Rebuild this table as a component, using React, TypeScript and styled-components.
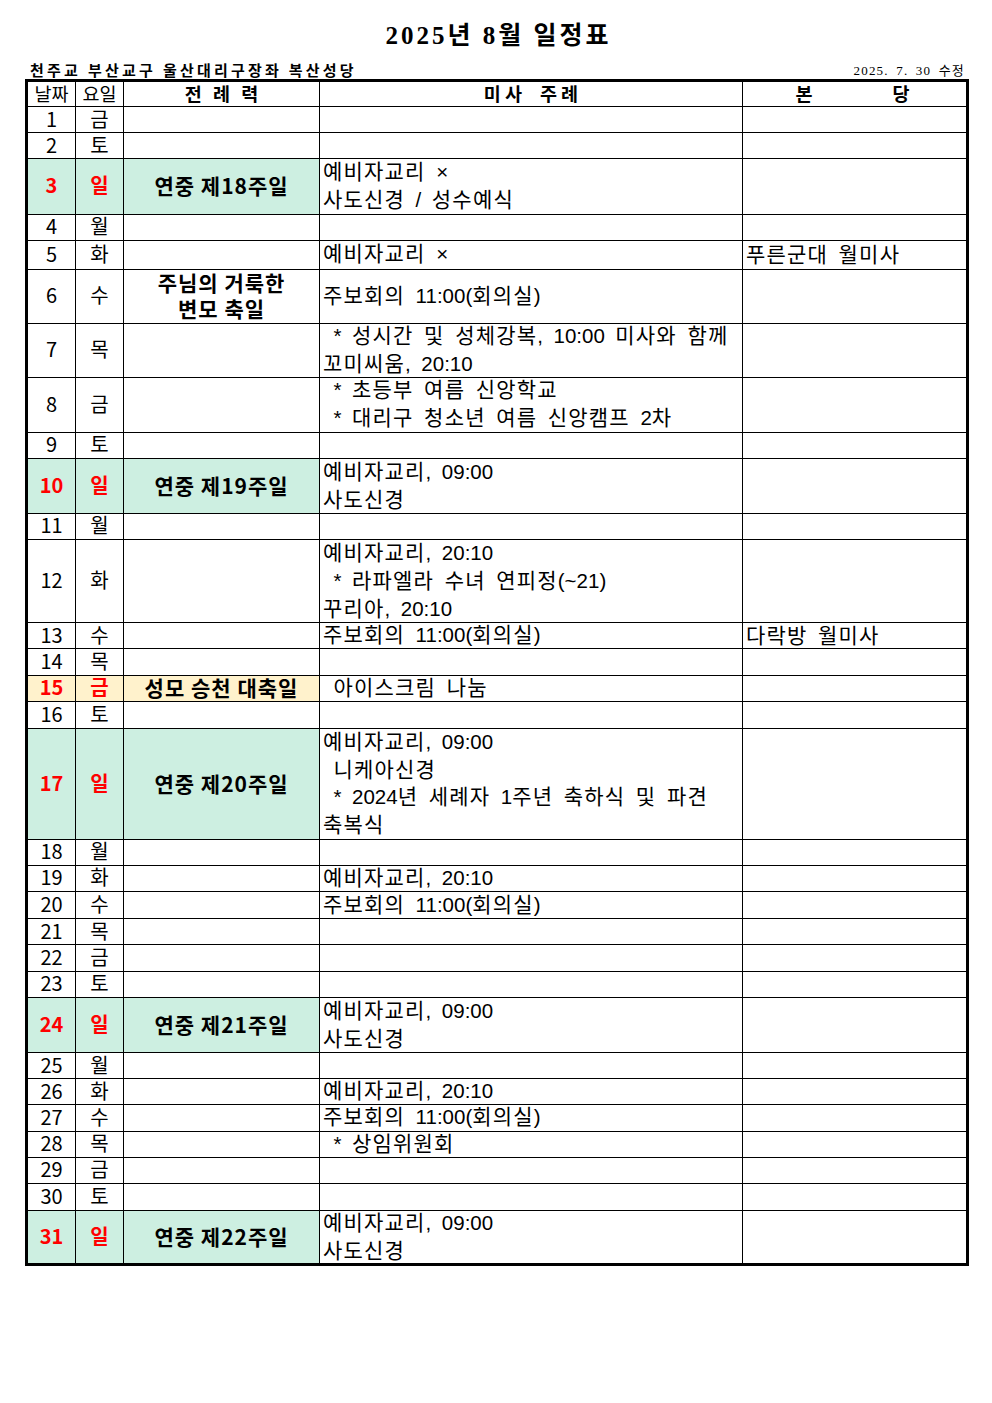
import React from "react";
import styled, { createGlobalStyle } from "styled-components";

const GlobalStyle = createGlobalStyle`
  html, body { margin: 0; padding: 0; background: #fff; }
  body { font-family: "Noto Sans CJK KR", "Noto Sans", sans-serif; color: #000; }
`;

const COLS = "48px 48px 196px 423px 223px";
const GREEN = "#cdefe1";
const YELLOW = "#fff2cc";
const RED = "#ff0000";

type Tone = "green" | "yellow" | undefined;

interface RowData {
  d: number;
  w: string;
  h: number;
  tone?: Tone;
  feast?: string[];
  mass?: string[];
  parish?: string;
}

const rows: RowData[] = [
  { d: 1, w: "금", h: 26 },
  { d: 2, w: "토", h: 26 },
  { d: 3, w: "일", h: 55.5, tone: "green", feast: ["연중 제18주일"], mass: ["예비자교리 ×", "사도신경 / 성수예식"] },
  { d: 4, w: "월", h: 26.5 },
  { d: 5, w: "화", h: 28.5, mass: ["예비자교리 ×"], parish: "푸른군대 월미사" },
  { d: 6, w: "수", h: 54, feast: ["주님의 거룩한", "변모 축일"], mass: ["주보회의 11:00(회의실)"] },
  { d: 7, w: "목", h: 54.5, mass: [" * 성시간 및 성체강복, 10:00 미사와 함께", "꼬미씨움, 20:10"] },
  { d: 8, w: "금", h: 54.5, mass: [" * 초등부 여름 신앙학교", " * 대리구 청소년 여름 신앙캠프 2차"] },
  { d: 9, w: "토", h: 26.5 },
  { d: 10, w: "일", h: 54.5, tone: "green", feast: ["연중 제19주일"], mass: ["예비자교리, 09:00", "사도신경"] },
  { d: 11, w: "월", h: 26.5 },
  { d: 12, w: "화", h: 83, mass: ["예비자교리, 20:10", " * 라파엘라 수녀 연피정(~21)", "꾸리아, 20:10"] },
  { d: 13, w: "수", h: 26, mass: ["주보회의 11:00(회의실)"], parish: "다락방 월미사" },
  { d: 14, w: "목", h: 26.5 },
  { d: 15, w: "금", h: 26.5, tone: "yellow", feast: ["성모 승천 대축일"], mass: [" 아이스크림 나눔"] },
  { d: 16, w: "토", h: 27 },
  { d: 17, w: "일", h: 110.5, tone: "green", feast: ["연중 제20주일"], mass: ["예비자교리, 09:00", " 니케아신경", " * 2024년 세례자 1주년 축하식 및 파견", "축복식"] },
  { d: 18, w: "월", h: 26 },
  { d: 19, w: "화", h: 26.5, mass: ["예비자교리, 20:10"] },
  { d: 20, w: "수", h: 27, mass: ["주보회의 11:00(회의실)"] },
  { d: 21, w: "목", h: 26 },
  { d: 22, w: "금", h: 26.5 },
  { d: 23, w: "토", h: 26 },
  { d: 24, w: "일", h: 55.5, tone: "green", feast: ["연중 제21주일"], mass: ["예비자교리, 09:00", "사도신경"] },
  { d: 25, w: "월", h: 26 },
  { d: 26, w: "화", h: 26, mass: ["예비자교리, 20:10"] },
  { d: 27, w: "수", h: 26.5, mass: ["주보회의 11:00(회의실)"] },
  { d: 28, w: "목", h: 26, mass: [" * 상임위원회"] },
  { d: 29, w: "금", h: 26.5 },
  { d: 30, w: "토", h: 27 },
  { d: 31, w: "일", h: 52, tone: "green", feast: ["연중 제22주일"], mass: ["예비자교리, 09:00", "사도신경"] },
];

const Page = styled.div`
  width: 992px;
  box-sizing: border-box;
  padding: 20px 23px 0 25px;
`;

const Title = styled.h1`
  margin: 0;
  height: 32px;
  line-height: 32px;
  text-align: center;
  font-family: "Liberation Serif", "Noto Sans CJK KR", serif;
  font-weight: 700;
  font-size: 25px;
  letter-spacing: 3px;
  padding-left: 3px;
`;

const SubHeader = styled.div`
  margin-top: 8px;
  height: 19px;
  display: flex;
  justify-content: space-between;
  align-items: center;
  padding: 0 4px 0 5px;
`;

const Parish = styled.span`
  font-family: "Liberation Serif", "Noto Sans CJK KR", serif;
  font-weight: 700;
  font-size: 15px;
  letter-spacing: 3.2px;
`;

const Revised = styled.span`
  font-family: "Liberation Serif", "Noto Sans CJK KR", serif;
  font-size: 13px;
  letter-spacing: 1.2px;
  word-spacing: 3px;
`;

const Table = styled.div`
  width: 944px;
  box-sizing: border-box;
  border: 3px solid #000;
`;

const Row = styled.div<{ $h: number; $last?: boolean }>`
  display: grid;
  grid-template-columns: ${COLS};
  grid-template-rows: minmax(0, 1fr);
  height: ${(p) => p.$h}px;
  box-sizing: border-box;
  border-bottom: ${(p) => (p.$last ? "none" : "1px solid #000")};
`;

const Cell = styled.div<{ $tone?: Tone; $align?: "center" | "left"; $last?: boolean }>`
  box-sizing: border-box;
  min-height: 0;
  min-width: 0;
  border-right: ${(p) => (p.$last ? "none" : "1px solid #000")};
  background: ${(p) => (p.$tone === "green" ? GREEN : p.$tone === "yellow" ? YELLOW : "transparent")};
  display: flex;
  flex-direction: column;
  justify-content: center;
  align-items: ${(p) => (p.$align === "left" ? "flex-start" : "center")};
  padding: ${(p) => (p.$align === "left" ? "0 0 3px 3px" : "0 0 2px 0")};
`;

const HeadText = styled.span`
  font-size: 18.5px;
  line-height: 20px;
  white-space: pre;
`;

const HeadLabel = styled.span<{ $ls: number; $ws: number }>`
  font-size: 18.5px;
  font-weight: 700;
  line-height: 20px;
  white-space: pre;
  letter-spacing: ${(p) => p.$ls}px;
  word-spacing: ${(p) => p.$ws}px;
  padding-left: ${(p) => p.$ls}px;
`;

const SpreadHead = styled.div`
  display: flex;
  gap: 80px;
  font-size: 18.5px;
  font-weight: 700;
  line-height: 20px;
  padding-right: 4px;
`;

const DayText = styled.span<{ $red?: boolean }>`
  font-size: 20px;
  line-height: 20px;
  color: ${(p) => (p.$red ? RED : "#000")};
  font-weight: ${(p) => (p.$red ? 700 : 400)};
`;

const FeastText = styled.span`
  font-size: 21px;
  font-weight: 700;
  line-height: 26px;
  letter-spacing: 1px;
  text-align: center;
  white-space: pre;
`;

const EntryText = styled.span`
  font-size: 21px;
  line-height: 27px;
  letter-spacing: 1.2px;
  white-space: pre;
  word-spacing: 0.22em;
`;

const Latin = styled.span`
  font-family: "Liberation Sans", Arial, sans-serif;
  font-size: 20.5px;
  letter-spacing: 0;
`;

const LATIN_RUN = /([\x21-\x7e\u00d7]+)/;

function renderEntry(s: string) {
  return s.split(LATIN_RUN).map((part, i) =>
    i % 2 === 1 ? <Latin key={i}>{part}</Latin> : <React.Fragment key={i}>{part}</React.Fragment>
  );
}

export default function App() {
  return (
    <>
      <GlobalStyle />
      <Page>
        <Title>2025년 8월 일정표</Title>
        <SubHeader>
          <Parish>천주교 부산교구 울산대리구장좌 복산성당</Parish>
          <Revised>2025. 7. 30 수정</Revised>
        </SubHeader>
        <Table>
          <Row $h={25}>
            <Cell><HeadText>날짜</HeadText></Cell>
            <Cell><HeadText>요일</HeadText></Cell>
            <Cell><HeadLabel $ls={2} $ws={3}>전 례 력</HeadLabel></Cell>
            <Cell><HeadLabel $ls={4} $ws={6}>미사 주례</HeadLabel></Cell>
            <Cell $last>
              <SpreadHead>
                <span>본</span>
                <span>당</span>
              </SpreadHead>
            </Cell>
          </Row>
          {rows.map((r, i) => {
            const red = !!r.tone;
            return (
              <Row key={r.d} $h={r.h} $last={i === rows.length - 1}>
                <Cell $tone={r.tone}>
                  <DayText $red={red}>{r.d}</DayText>
                </Cell>
                <Cell $tone={r.tone}>
                  <DayText $red={red}>{r.w}</DayText>
                </Cell>
                <Cell $tone={r.tone}>
                  {r.feast?.map((f) => (
                    <FeastText key={f}>{f}</FeastText>
                  ))}
                </Cell>
                <Cell $align="left">
                  {r.mass?.map((m, j) => (
                    <EntryText key={j}>{renderEntry(m)}</EntryText>
                  ))}
                </Cell>
                <Cell $align="left" $last>
                  {r.parish && <EntryText>{renderEntry(r.parish)}</EntryText>}
                </Cell>
              </Row>
            );
          })}
        </Table>
      </Page>
    </>
  );
}
